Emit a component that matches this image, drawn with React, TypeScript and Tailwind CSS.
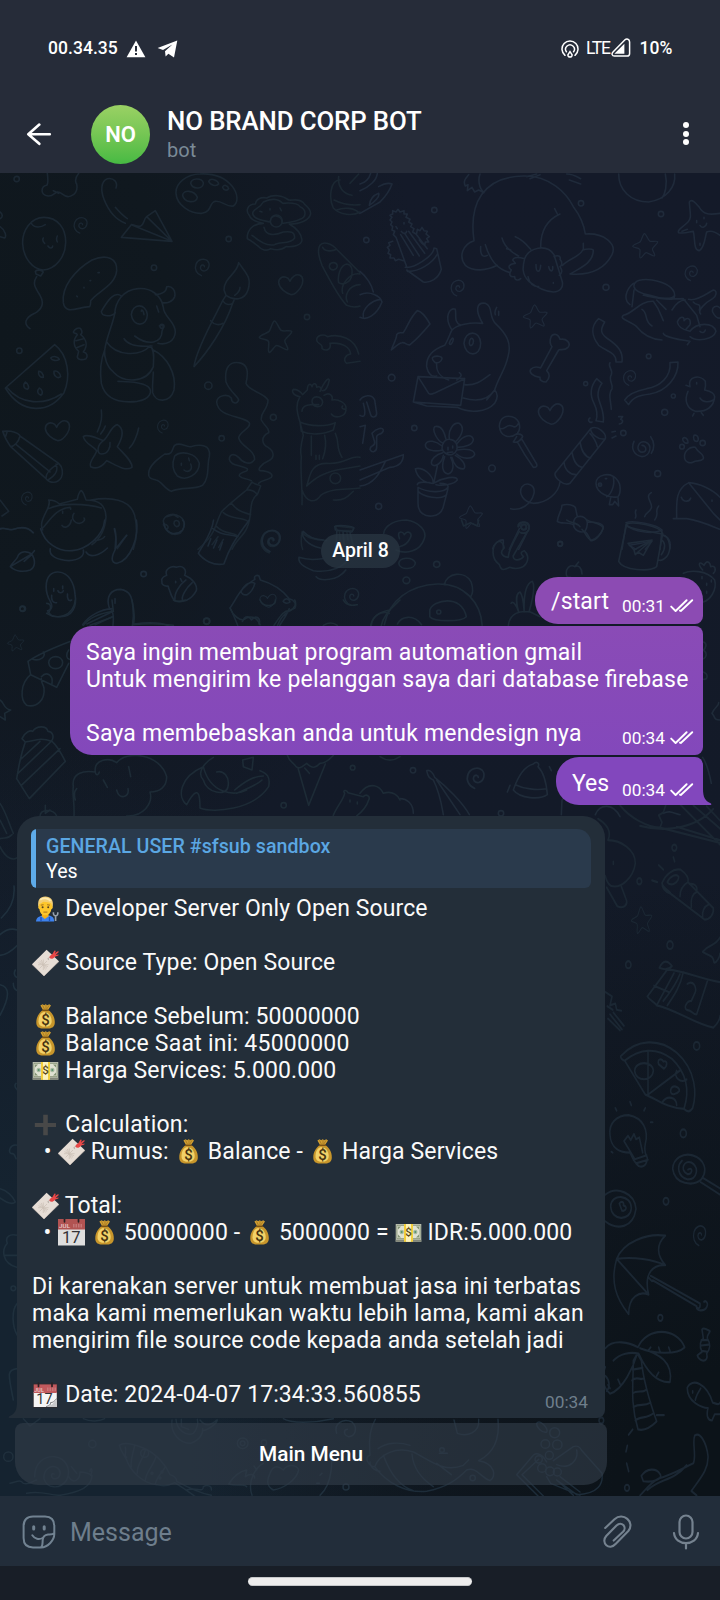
import type { ReactNode } from "react";

const STAR =
  "M-4 -46C2 -48 10 -22 17 -17C24 -12 46 -20 49 -14C51 -8 29 7 28 14C27 22 42 38 36 42C30 44 10 28 3 29C-4 30 -14 52 -20 50C-26 46 -18 22 -22 16C-28 8 -50 10 -50 4C-48 -4 -26 -8 -20 -14C-15 -20 -10 -44 -4 -46Z";
const HEART =
  "M2 30C-14 26 -34 12 -36 -6C-36 -20 -24 -26 -14 -22C-6 -20 -4 -14 -2 -10C2 -22 16 -34 28 -28C40 -22 38 -4 30 8C22 20 12 30 2 30Z";
const SPIRAL =
  "M-2 30C-18 24 -26 8 -20 -8C-14 -24 6 -30 18 -20C28 -10 24 10 10 14C-2 16 -8 6 -4 -2C0 -8 8 -6 8 0";

type Spot = [number, number, number];

function Marks({ d, dots = [], stars = [], hearts = [], spirals = [] }: {
  d: string[];
  dots?: Spot[];
  stars?: Spot[];
  hearts?: Spot[];
  spirals?: Spot[];
}) {
  return (
    <>
      {d.map((p, i) => <path key={"p" + i} d={p} />)}
      {dots.map(([x, y, r], i) => <circle key={"d" + i} cx={x} cy={y} r={r} />)}
      {stars.map(([x, y, s], i) => <path key={"s" + i} d={STAR} transform={`translate(${x} ${y}) scale(${s})`} />)}
      {hearts.map(([x, y, s], i) => <path key={"h" + i} d={HEART} transform={`translate(${x} ${y}) scale(${s})`} />)}
      {spirals.map(([x, y, s], i) => <path key={"w" + i} d={SPIRAL} transform={`translate(${x} ${y}) scale(${s})`} />)}
    </>
  );
}

function Wallpaper() {
  return (
    <svg className="absolute inset-0" width="720" height="1323" viewBox="0 0 720 1323" fill="none" aria-hidden="true">
      <g stroke="#1d2a37" strokeWidth="4.8" strokeLinecap="round" strokeLinejoin="round">
        {/* upper left */}
        <g transform="translate(0 -3) scale(.33333)" stroke="#1b2732">
          <Marks
            d={[
              "M142 10C144 30 146 42 140 46C122 50 120 74 144 78C158 80 164 68 172 66C184 64 188 80 204 80C226 76 234 62 230 42C222 30 228 20 236 10M160 62L176 70",
              "M132 142C92 142 66 182 68 222C70 264 98 298 130 300C166 298 196 262 197 218C198 174 172 142 132 142ZM94 160C104 176 124 172 136 164M130 204C126 210 130 216 134 220M172 198C168 206 170 212 172 216M144 228C150 238 158 234 158 228M106 304C112 298 124 300 130 306L122 318L108 312ZM110 320C96 340 106 354 120 376C136 402 122 420 104 430C74 444 70 462 90 476",
              "M348 54C354 38 342 22 322 26C302 34 302 62 312 88C326 124 350 150 376 160M346 112C358 126 370 138 382 146M364 202L394 164C404 164 412 172 422 168C434 162 430 148 440 140L466 122L516 214ZM394 164L516 214L440 140",
              "M600 12C560 12 526 40 528 70C530 104 570 132 606 130C638 124 626 98 646 94C668 92 680 112 700 108C716 98 714 70 696 48C674 22 640 10 600 12ZM572 40C574 24 604 22 610 38C612 58 578 60 572 40ZM548 76C548 58 584 60 592 82C590 102 552 98 548 76ZM626 34C632 22 654 30 656 42C650 50 630 46 626 34ZM668 52C670 42 684 46 686 56C682 64 670 60 668 52Z",
              "M800 84C782 80 768 88 766 102C742 102 736 124 748 136C752 150 768 156 790 160C760 160 740 180 742 206C756 212 764 222 774 228C788 242 800 244 812 236C832 242 846 240 858 230C882 232 904 226 906 210C904 190 892 176 868 162C900 162 930 150 932 130C930 110 916 108 910 98C896 84 880 92 866 90C848 76 820 72 800 84ZM790 96C812 84 836 86 848 100C870 98 892 98 900 110C920 118 920 142 900 148C880 158 860 158 846 160C848 136 816 128 810 156C790 152 760 148 758 130C758 116 780 116 790 96ZM792 172C798 200 826 196 850 186C872 184 884 184 884 204C870 224 840 214 824 224C796 230 772 208 756 196M810 116V120M840 114L844 122M780 124L786 126",
              "M190 398C184 352 224 300 276 270C324 250 352 268 350 302C346 346 296 362 272 392C272 404 272 408 268 410C232 412 196 436 190 398ZM294 308L298 308M270 332L272 332M252 352L252 354M230 378L232 380",
              "M344 432C346 396 368 360 414 356C452 352 484 376 490 412C490 440 526 454 526 486C524 514 500 526 474 520M344 432C336 470 320 500 314 540C302 570 300 610 304 640C316 690 360 700 412 694C450 688 460 664 444 650C424 636 390 636 354 634M364 378C344 362 324 390 304 424C304 442 336 440 346 428M466 374C486 374 500 364 500 350C516 346 528 362 524 380C518 396 500 400 488 398M394 434C396 400 438 398 442 434C442 472 398 472 394 434ZM424 424C424 416 430 420 432 434M470 408L476 426M478 468C486 464 492 468 490 472L486 484C486 518 446 530 404 498M372 506C386 530 430 530 456 528M320 516C350 560 420 560 450 528C466 540 460 570 460 590C440 640 370 640 340 606C320 590 312 560 314 540M460 540C500 560 530 610 522 660C510 700 466 698 458 668C456 640 460 620 460 606",
              "M716 278C712 312 672 322 672 360L678 376C700 392 734 392 744 360C756 322 738 310 716 278ZM704 376C716 368 720 362 720 352M678 376L668 392C676 404 688 406 698 400L704 386M668 392C650 430 588 536 582 590C620 550 676 470 698 400M632 452C644 466 660 466 668 460",
              "M220 486C224 478 236 470 242 476C248 484 246 490 242 494C262 510 262 530 250 546C262 548 264 560 258 566C246 572 232 568 232 560L236 544C220 530 218 510 232 494C228 488 222 492 220 486ZM228 512L250 506M228 534L252 524",
              "M164 524C206 556 212 622 192 668C148 730 66 736 16 654ZM20 652C64 706 132 706 184 672M152 564C160 556 174 560 178 568C170 574 156 572 152 564ZM116 604C122 602 132 614 130 622C120 624 114 614 116 604ZM162 604C172 600 182 612 182 620C172 628 160 616 162 604ZM76 636C84 640 90 654 82 658C70 656 68 644 76 636ZM118 654C128 658 130 672 122 676C112 672 110 662 118 654Z",
              "M8 784C36 780 58 790 60 798L176 880C188 890 190 910 184 922C172 942 150 940 138 926L32 830C22 816 14 804 8 784ZM60 798C56 816 42 830 32 830M176 880C156 892 136 910 138 926M168 882C178 906 160 920 144 930M46 822L150 906M8 784L22 784L16 802Z",
              "M250 800C260 790 290 804 310 812C326 800 334 766 352 764C372 776 370 800 352 830C370 850 398 874 396 892C376 906 346 884 320 872C306 890 292 900 272 890C264 876 288 856 290 842C276 826 254 820 250 800ZM310 812C290 826 290 850 304 852C324 852 332 832 330 818M304 720C306 740 306 756 292 786M316 768C312 780 306 786 302 792M416 774C412 796 400 824 388 834",
              "M446 910C446 884 480 864 494 852C520 856 516 834 524 826C540 814 556 832 572 830C600 822 634 822 628 860C620 890 630 920 608 946C576 962 548 948 514 964C492 956 486 934 468 930C454 926 444 924 446 910ZM524 858C542 842 588 846 598 880C598 912 560 936 532 918C514 898 518 874 524 858ZM544 880L544 886M566 864L568 872M552 900C564 910 580 900 572 882",
              "M678 636C672 590 692 574 716 578C744 582 746 606 738 640C746 664 790 666 804 690C804 720 780 726 784 750C794 770 810 774 806 788C780 800 786 824 804 832C824 844 824 864 806 872C782 882 772 900 780 902C812 904 820 914 814 922C800 932 784 930 776 940M678 636C690 666 712 676 716 690C710 706 694 698 694 684C682 670 652 676 650 696C654 744 728 736 748 758C754 776 718 784 716 804C724 832 764 838 764 868C750 890 726 876 716 862C700 848 688 854 688 868C692 888 720 884 742 896C746 908 716 904 718 918C728 928 738 924 754 932",
              "M756 936L740 960C728 970 676 1012 664 1026C642 1070 650 1090 594 1138M756 936C764 944 776 944 782 948L772 974C744 990 758 1040 742 1070C734 1096 712 1104 696 1138M740 960C750 958 766 964 772 974M694 1000C710 1020 720 1024 752 1034M670 1028C694 1050 724 1040 744 1054M650 1070C676 1096 700 1084 714 1100M654 1100L636 1124M670 1108L656 1132",
              "M1020 30C990 30 986 86 1000 114C1020 136 1060 138 1080 126M1016 20C1012 50 1030 72 1056 76M1002 90C1030 104 1060 106 1080 104M1010 120C1030 112 1064 112 1078 130M1050 40L1076 12",
              "M960 226C970 212 996 220 1012 240L1080 308M960 226C950 240 958 266 966 286C994 340 1020 386 1040 406C1060 414 1076 410 1080 408M968 232C974 246 998 244 1010 238M988 290C988 274 1010 274 1012 288C1010 302 992 304 988 290ZM1040 282C1020 286 1012 320 1016 338C1026 346 1048 340 1054 322C1060 296 1054 284 1040 282ZM1080 312C1050 306 1020 344 1028 370M1080 344C1046 346 1032 376 1042 396",
              "M950 510C950 496 972 490 982 500C1020 490 1066 506 1076 552M950 510C950 524 970 518 966 536C982 546 994 536 990 520C1030 516 1050 534 1052 552C1036 554 1028 570 1040 580L1080 574",
              "M906 1004C908 960 900 900 904 860C898 840 904 820 910 796L900 756C888 720 888 700 900 680C878 676 874 662 880 658C894 658 904 668 908 674L922 660C922 642 932 638 936 650C940 636 950 640 950 652C964 646 966 660 960 664C970 640 984 620 988 630C984 650 976 662 968 662M900 756C930 770 980 770 1006 758L1000 780C970 794 930 796 904 784ZM906 724C906 704 932 702 956 704M936 694C936 676 964 676 968 696C966 716 938 714 936 694ZM972 676C990 664 1000 680 996 690C1016 686 1040 700 1038 716C1030 720 1022 712 1028 708M1038 720C1036 740 1006 748 994 732M934 798V856M974 796C980 820 974 850 968 866M948 856V868M958 856V868M1006 790C1020 820 1006 830 1026 862M920 948C950 920 970 910 1010 900L1080 888M1080 862C1050 854 1040 884 980 880C930 880 930 920 920 948M906 960C920 1000 946 1000 962 976C994 952 1046 960 1080 954M1000 990C1040 994 1050 970 1060 964",
              "M128 1080C112 1050 158 1010 146 990C164 990 172 996 178 1002L232 988C234 974 240 962 244 962C252 966 254 982 258 990C300 990 316 1006 318 1040C316 1080 300 1106 276 1124M146 1016C180 998 260 1000 304 1014M128 1074C150 1050 170 1014 210 1012M272 990C330 980 390 986 404 1036C414 1080 410 1110 400 1138M188 1024V1030M212 1014V1018M222 1030C212 1044 222 1060 240 1060C252 1058 256 1048 252 1044M214 1050C210 1072 192 1076 186 1066M344 1076C352 1096 344 1120 346 1138M380 1096L352 1136M286 1112C300 1110 310 1106 314 1100",
              "M490 1052C494 1034 520 1026 540 1040C560 1052 552 1080 540 1090C516 1100 492 1084 490 1052ZM500 1040L520 1034L534 1042M526 1052C538 1048 544 1068 530 1070C520 1066 520 1056 526 1052ZM490 1064C500 1060 510 1072 500 1078M514 1092L532 1090",
              "M906 1086C902 1110 904 1128 908 1138M906 1086C920 1106 950 1110 980 1112M1006 1068L1060 1074L1058 1082H1012ZM1018 1082L1020 1110M1030 1082V1110M1040 1082L1044 1110",
              "M0 126C8 132 10 142 0 146M0 170C16 180 20 200 14 204L0 200M0 990L26 1024L6 1038M0 1078C16 1070 24 1082 40 1078C66 1070 84 1072 100 1088",
            ]}
            dots={[[50, 27, 8], [686, 207, 8], [462, 293, 8], [58, 542, 8], [921, 441, 8], [625, 647, 11], [820, 742, 9], [665, 805, 8], [829, 153, 18], [1006, 925, 16], [486, 469, 6]]}
            stars={[[827, 498, 0.98]]}
            hearts={[[872, 344, 1], [172, 782, 1]]}
            spirals={[[241, 164, 0.85], [606, 290, 0.9], [488, 768, 0.7], [80, 984, 0.7], [810, 1112, 1.2]]}
          />
        </g>
        {/* upper right */}
        <g transform="translate(360 -3) scale(.33333)" stroke="#1f2a3a">
          <Marks
            d={[
              "M0 62C30 50 50 30 52 10M0 42C16 38 28 24 32 10M56 50C70 42 86 38 96 42C90 60 80 76 60 96L0 130M28 106C30 86 40 76 56 70C60 80 44 96 28 106Z",
              "M90 150L96 142L90 136L98 132L98 122L108 126L114 118L120 126L132 122L132 132L142 132L138 142L150 148L146 156L156 162L152 170L162 176L158 186L168 192L202 236M90 150L96 156L92 164L98 170L96 180L104 184L100 194L108 202L140 290M98 214L86 218L90 226L82 232L88 240L84 250L92 254L90 264L102 264L106 272L116 268L130 272M170 190L172 178L180 182L186 172L192 182L202 184L198 192L208 200L200 206L206 216L196 216L194 226C188 222 182 216 178 210M136 292C160 296 220 260 222 234L230 236L244 298C236 326 210 340 190 336L140 300M142 304C176 306 218 280 232 252M122 194L160 256M134 190L178 258M146 184L194 250M108 170L112 176M132 158V162M124 184C130 194 140 190 140 184",
              "M342 212C326 100 370 20 490 18C570 16 620 70 640 110C660 136 672 166 676 192M316 48C308 34 318 24 326 14M316 48L324 44L322 62L336 52L344 66L356 60L372 68C356 54 354 28 360 12M500 20L530 12M510 26L540 14M620 12C640 12 650 20 662 26M628 30L662 42M342 212C306 224 296 260 316 286C340 306 380 302 412 286M362 230C360 260 372 262 382 256M376 224C390 270 410 296 450 308M426 204C434 234 460 250 476 258M466 200C490 210 502 226 512 238M542 230C542 180 560 150 600 132M584 116L592 132M676 192C730 188 772 220 756 254C730 304 680 316 630 312C660 294 700 280 700 240C696 236 680 236 668 240C660 260 620 270 608 286M670 220V238M494 266C506 232 560 220 582 254L606 332C612 352 600 366 580 366C550 364 530 352 506 334C484 310 488 290 494 266ZM494 266C480 262 462 258 458 270L466 280C446 282 442 292 454 300C446 312 448 322 464 320C464 332 476 332 482 326M582 260C592 254 604 258 600 268C608 276 606 286 600 290C608 300 606 312 598 316M528 284C528 310 540 310 542 286M566 290C570 308 580 306 578 290M504 320C508 340 520 350 536 350M580 338V340M440 236L452 240",
              "M776 12C776 60 812 96 866 96C920 88 948 50 944 12M916 12C924 44 914 74 906 84",
              "M988 96C994 84 1008 100 1018 112C1030 132 1044 136 1080 130M988 96C990 130 996 144 984 156C970 170 950 180 956 188C976 192 990 184 1000 184C1006 210 1000 240 1018 242C1034 232 1034 206 1040 186C1054 180 1072 190 1080 196M1010 152V158M1032 142V146M1020 166C1026 176 1038 172 1040 160M1020 220V226M966 184L982 178",
              "M822 350C820 330 850 326 876 330C916 336 944 354 944 376C936 390 900 386 870 376C840 370 824 362 822 350ZM822 360L816 410M820 340C796 360 790 390 810 404M944 376L942 386C920 392 880 382 850 376M880 394C840 392 820 430 790 436C776 448 810 452 830 470C850 496 880 508 906 510M880 394C900 420 904 440 910 452M846 418C866 430 850 452 876 468M906 386C930 384 950 388 970 386L1010 436L1020 470M936 420C950 396 964 390 976 390M918 418L890 390M986 388C1010 396 1050 364 1060 360C1074 362 1068 380 1058 386C1040 396 1010 420 1022 432M1000 396C1010 410 1024 396 1018 420M990 484C1010 456 1060 456 1068 484C1060 510 1010 516 990 500M990 484C970 480 954 470 952 456C958 440 974 436 972 452C982 440 994 446 990 464L978 478M1020 484C1026 490 1034 488 1036 480M910 490C910 500 960 510 990 514L982 524M1080 414C1070 404 1054 410 1058 426C1064 438 1072 446 1080 444",
              "M94 540C100 522 110 506 110 494C116 484 122 490 130 488C142 470 152 440 172 422C186 424 202 448 210 462C190 486 170 508 150 524C142 528 136 516 126 518C114 520 104 532 94 540Z",
              "M276 480C250 440 270 410 286 418C290 436 280 456 302 466M276 480C290 464 330 456 368 460C344 420 350 396 376 400C400 410 386 440 406 460C440 492 456 520 444 560C436 600 416 620 404 660M276 480C270 490 264 510 254 526C226 536 198 556 200 590C204 612 216 622 230 618M312 520C314 480 360 478 362 520C362 562 316 562 312 520ZM328 520C328 506 336 500 340 510C342 524 330 534 328 520ZM268 520C272 506 280 500 280 508C278 520 270 528 268 520ZM218 562C228 556 246 558 246 566C244 576 234 580 226 578C220 572 214 568 218 562ZM230 580C228 610 244 622 266 630M298 608C310 616 300 622 290 630M312 644C350 648 370 628 390 614M410 412C404 422 404 428 406 434M416 424V436",
              "M174 620L314 626L302 706L160 696ZM174 620L206 670C214 676 220 670 226 668L314 626M310 684C350 696 384 690 404 660C416 672 410 690 404 700C380 728 326 730 292 712M380 690L404 660M160 696L200 708L290 712",
              "M572 504C576 490 594 488 600 508C620 504 634 520 624 532C612 544 600 536 596 540L560 602C570 612 570 624 558 636C546 636 538 630 540 622C520 620 506 608 512 598C524 586 536 592 542 594L576 530C568 520 570 510 572 504Z",
              "M716 446C690 470 696 500 716 526C740 544 770 548 768 576H786C790 546 776 528 740 504C722 490 720 480 734 456ZM750 578C742 590 760 598 754 614C744 632 760 640 756 656C744 672 752 690 754 718M710 626C690 650 690 676 702 700C712 720 712 740 708 752L730 756C734 720 716 700 714 676C714 660 718 650 726 640ZM930 578L954 576C956 620 920 664 870 672C840 676 820 680 806 704L794 690C806 670 830 662 860 656C900 650 934 620 930 578Z",
              "M990 650C980 620 1020 612 1036 634C1038 648 1036 654 1034 660C1044 662 1062 664 1064 680C1062 710 1040 726 1006 724C980 716 972 690 984 664M990 650L978 646M1020 684C1030 700 1050 696 1060 690M1002 730L998 738M1024 728L1030 736M1010 638V642",
              "M418 768C420 740 440 736 456 740C484 748 482 780 472 790C450 808 420 800 418 768ZM420 776C436 780 440 760 456 768C466 776 474 764 476 758M458 798C470 790 486 790 488 800C484 810 470 820 460 816L470 800M472 816C490 850 504 870 520 892C530 892 532 888 530 882L486 808",
              "M246 836C246 818 256 806 270 808C288 810 294 826 290 840C286 852 272 858 260 852C252 848 248 844 246 836ZM250 820C230 812 216 780 224 770C246 764 254 790 258 808M268 806C264 780 280 756 298 760C314 770 308 796 286 816M292 820C310 796 334 790 340 808C340 824 316 832 292 832M292 840C320 834 344 840 344 854C336 870 304 866 290 852M286 856C304 866 320 884 312 896C292 900 280 880 276 862M272 862C284 884 280 908 264 912C246 908 244 886 254 860M250 856C246 880 226 892 216 884C208 870 230 852 248 848M246 840C226 846 196 842 196 824C202 806 230 814 246 828M264 832V840M278 828V834M262 848L278 846M232 888L222 936M166 896C190 890 220 916 220 940C190 940 170 920 166 896ZM220 940C250 922 290 916 292 930C280 944 250 948 228 944M172 944C172 936 190 936 210 938M240 940C256 940 266 944 264 952C250 972 200 966 174 952V1000C174 1030 196 1040 216 1038C236 1036 246 1026 250 1010L264 956M174 964C190 980 240 992 260 974",
              "M692 776C712 764 740 790 736 806L630 940C610 950 580 920 586 908ZM692 776C692 790 714 812 736 806M660 816C664 840 672 860 692 864M636 846C640 870 648 890 668 892M612 876C614 900 630 914 648 914M690 790C700 800 710 820 712 830M600 936C596 970 560 1000 520 1000C490 996 474 970 486 950C500 934 526 944 522 970C514 1004 480 1024 452 1016",
              "M708 940C708 914 750 902 772 930C784 944 782 972 774 980C750 986 708 970 708 940ZM760 922C766 950 750 976 740 980M752 984L748 1004H758L764 994L776 1008L774 982M720 942V946M736 926H740M690 744C680 750 690 760 696 756M776 740H788L782 748C792 752 788 760 778 762M756 786L766 784M756 804L768 798",
              "M846 826C860 826 864 850 842 846C826 836 836 812 856 816C880 826 870 858 846 860C822 856 812 836 822 814M872 800C884 816 884 836 874 850",
              "M974 866C970 846 988 828 1006 832C1016 850 1034 852 1030 866C1022 876 1010 870 1000 876C988 882 976 876 974 866ZM968 806C976 796 986 812 984 818C976 822 968 816 968 806ZM1002 796C1014 792 1018 808 1012 814C1002 816 998 804 1002 796Z",
              "M950 1046C950 1000 944 960 986 938C1020 940 1060 960 1080 982M986 938L1060 1030L1080 1050M940 1046L980 1046C1020 1052 1060 1070 1080 1078M964 982C972 1000 990 994 992 984M1056 990V994",
              "M606 1006C622 1000 640 1006 646 1012L652 1040C670 1036 680 1046 682 1056C700 1056 726 1058 730 1070C728 1090 706 1110 692 1112C686 1100 684 1090 674 1084C660 1090 642 1080 640 1064C626 1056 600 1062 592 1054C594 1034 606 1020 606 1006ZM652 1040C642 1046 640 1056 642 1064M682 1056C682 1070 680 1078 674 1084",
              "M828 1020C822 1030 832 1036 826 1044M874 968C852 980 880 1000 874 1014C868 1030 856 1026 854 1040M896 1008C882 1026 900 1030 884 1050M798 1058C820 1050 890 1064 906 1080C880 1094 820 1086 798 1064L786 1138M906 1080L900 1138M906 1096C924 1096 934 1116 930 1136M808 1126L876 1114L856 1138M808 1126L828 1138",
              "M476 1070C480 1054 506 1052 508 1070C508 1086 494 1092 484 1088M478 1076L448 1138M502 1086L476 1138M398 1136C402 1120 420 1108 430 1110V1136",
              "M0 690C10 676 36 670 44 690L50 730C50 744 34 744 32 734L20 696M0 736C16 746 18 730 10 700M36 790C50 774 70 770 70 782C66 796 50 790 50 800L50 830C50 846 36 850 30 838C30 824 46 830 44 816ZM0 770L16 766L8 820M0 900L130 854C130 880 110 890 90 892L0 930M76 874C60 910 40 944 0 948",
              "M0 304C20 320 36 346 40 366M0 374C30 360 62 380 66 396C50 436 20 452 0 442M10 440C6 420 30 392 62 388",
            ]}
            dots={[[223, 120, 8], [19, 210, 8], [663, 100, 8], [903, 132, 8], [738, 352, 9], [866, 559, 7], [95, 623, 10], [677, 641, 6], [940, 678, 6], [914, 727, 9], [790, 789, 8], [163, 774, 8], [396, 895, 10], [893, 911, 9], [56, 1009, 9], [600, 1122, 7], [1028, 819, 8], [966, 830, 7], [492, 1072, 8], [720, 944, 5]]}
            stars={[[856, 226, 0.76], [526, 438, 0.72], [333, 1040, 0.7]]}
            hearts={[[572, 732, 1.02]]}
            spirals={[[292, 352, 0.85], [993, 308, 0.8], [808, 622, 0.8]]}
          />
        </g>
        {/* band around the date */}
        <g transform="translate(0 347) scale(.3444 .33333)">
          <Marks
            d={[
              "M118 26C130 70 170 96 210 92C250 88 300 50 304 0M146 86C140 110 170 120 200 122C230 120 246 108 242 90M250 96C262 116 290 106 312 84M396 0C404 50 380 120 340 130C320 128 324 110 334 90C340 70 336 40 332 26M368 46C350 66 340 84 336 84",
              "M30 140C36 126 50 120 54 104C66 90 84 96 92 102L100 92M92 102C106 124 100 144 88 150C70 156 46 156 30 140ZM70 124L92 104",
              "M134 200C134 170 150 154 170 156C200 158 216 190 218 224C224 260 210 290 176 290C150 292 144 284 138 272C150 270 154 260 146 244C138 230 134 216 134 200ZM156 206V214M182 198V206M168 212C172 222 182 218 184 212M150 226C148 240 154 250 164 248M196 222C194 236 200 246 208 240",
              "M318 266C306 230 322 208 350 208C380 212 384 236 386 262C390 290 386 306 384 320M318 266C330 270 330 296 328 316M240 314C256 290 290 268 326 266M252 312L324 276M276 314L326 290M334 236V250M390 312C430 306 470 308 490 318",
              "M576 100C590 72 616 40 620 0M576 100C590 120 620 138 650 132C664 90 680 60 724 0M618 26C650 52 670 40 690 50M612 56L604 78M630 60L620 84M646 66L638 90",
              "M470 184C466 172 480 168 484 166C476 146 500 136 512 142C530 134 544 148 536 166C560 176 574 196 570 212C556 240 530 250 506 242C494 224 492 210 488 198C478 200 468 194 470 184ZM510 184V188M524 176L528 184M540 180C520 196 506 220 508 238M558 188C540 204 526 230 530 240",
              "M668 264C690 230 700 200 740 178C736 168 746 164 752 168L756 180C790 190 820 210 840 236C856 240 862 254 856 264C840 272 820 280 806 316M668 264C676 280 684 300 690 316M700 214C712 190 730 184 740 190C736 206 730 216 718 224C708 226 700 222 700 214ZM822 244C828 232 840 236 842 246C836 252 824 250 822 244ZM704 304C712 284 726 290 730 300C744 282 758 296 752 312M840 266C830 290 816 310 812 316",
              "M476 10C480 40 510 50 530 30C538 16 536 4 530 0",
              "M880 34C874 50 890 74 930 84M880 34C894 50 910 60 940 60M868 112C866 130 880 140 910 152C960 160 1000 140 1016 112M868 112C890 120 910 120 936 116M918 170C930 184 980 184 1004 150M972 20C980 14 1024 18 1028 24L1022 36L974 30ZM978 34L976 84M996 36L1000 80M1016 36L1026 80",
              "M1114 40C1118 14 1150 0 1180 0C1220 6 1240 36 1232 56C1220 94 1180 104 1150 90M1160 56C1150 30 1170 34 1174 44C1184 28 1200 40 1190 56C1184 70 1170 78 1160 80M1158 130C1160 112 1196 108 1206 128C1206 150 1160 152 1158 130Z",
              "M1116 314C1130 240 1190 196 1270 192C1350 190 1396 250 1400 316M1290 194C1296 158 1350 150 1368 186C1376 210 1370 226 1366 232M1078 316C1082 284 1110 272 1130 280M1248 270C1256 240 1340 220 1354 290C1340 306 1260 306 1248 290ZM1154 312C1164 290 1200 280 1224 314",
              "M1504 20C1504 4 1530 0 1536 20C1536 40 1520 42 1512 38M1508 34C1494 60 1476 90 1476 112C1456 110 1450 96 1464 84C1460 62 1444 56 1434 80C1426 110 1440 126 1450 134C1456 154 1464 150 1480 142C1500 150 1520 144 1528 130C1536 116 1532 100 1522 92C1512 96 1510 100 1520 110C1508 124 1490 122 1490 108L1528 40",
              "M1484 250C1490 240 1502 260 1506 276C1496 240 1500 220 1510 216C1520 230 1520 250 1522 276C1520 220 1530 190 1546 184C1556 200 1546 240 1536 276M1476 316C1480 280 1510 270 1540 276L1568 290M1340 0L1346 18L1366 8L1386 18L1390 0M0 26C14 20 26 34 40 28C64 18 84 24 96 38",
            ]}
            dots={[[417, 162, 8], [66, 266, 8], [600, 303, 9], [1268, 133, 9], [1180, 181, 10], [1274, 276, 6], [1520, 20, 8]]}
            hearts={[[778, 242, 0.65]]}
            spirals={[[786, 60, 1.15], [1020, 228, 0.9]]}
          />
        </g>
        {/* right of the outgoing messages */}
        <g transform="translate(400 347) scale(.33333)" stroke="#1f2b39">
          <Marks
            d={[
              "M680 12C700 4 780 16 788 40L770 140C750 156 670 152 656 124ZM684 20C710 30 750 34 786 42M788 44C810 50 816 90 800 110C790 120 780 122 776 120M784 60C796 66 798 86 784 104M684 70L756 60L730 106L714 96L706 104L702 90ZM702 90L756 60L714 96",
              "M850 160C870 150 920 150 944 180C952 210 930 240 910 246M908 150C890 130 900 122 912 136C920 120 930 124 932 140C946 134 950 150 940 160M906 170V176M920 190V196M934 180V186M920 214V220",
              "M500 150C496 170 502 172 512 172M500 150C506 138 516 134 524 140C536 134 546 144 546 162M524 140L536 126",
              "M340 810C350 780 370 740 400 732C410 722 420 730 414 740C434 760 440 800 442 824C420 840 360 836 340 810ZM346 794C370 806 410 812 438 806M330 796L322 816M448 740L454 752",
              "M80 752C90 748 100 760 104 772C140 800 190 850 208 884M80 752C84 770 88 776 100 780C120 820 124 850 130 884M110 780L180 884",
              "M0 836C20 836 40 850 40 880M484 884L486 840C500 826 520 820 530 830M586 884C600 850 640 850 660 890M790 880C810 870 820 880 840 884",
              "M908 712C920 730 930 770 934 790M936 580C944 560 956 560 956 548M936 580C946 590 940 600 960 600M910 366C924 370 916 386 910 390C924 400 918 414 910 416M910 456C926 462 924 480 910 478",
              "M500 0C510 10 530 6 540 20M560 0C576 10 600 6 610 24C604 40 590 60 576 62C560 56 556 36 546 28",
            ]}
            dots={[[481, 71, 7], [39, 751, 8], [303, 880, 8]]}
            spirals={[[226, 772, 1.1]]}
          />
        </g>
        {/* left of and below the outgoing messages */}
        <g transform="translate(0 427) scale(.33333)" stroke="#1d2b36">
          <Marks
            d={[
              "M84 184C120 160 170 140 212 124M84 184L92 224L170 262L206 190M130 156C140 170 120 184 98 178M146 188C148 164 186 164 188 188C186 212 148 212 146 188ZM124 230C140 212 160 226 156 250M92 224C60 250 60 300 80 316C110 324 136 300 132 264C130 254 124 250 124 236M206 150C196 164 200 176 208 178",
              "M0 300C16 310 8 326 32 330L14 340L16 360L0 350",
              "M66 416C74 396 92 390 98 394C110 376 140 376 144 394C158 394 164 412 154 424C120 410 100 424 76 426ZM76 426C60 470 56 500 50 536L88 596L196 484C184 460 170 436 156 424M60 480L120 424M54 520L152 426M64 556L180 446",
              "M222 648C224 600 216 590 220 560C214 520 250 510 286 516C280 480 326 470 350 488C380 450 480 460 500 530C500 560 480 576 450 576C460 610 430 650 380 648M286 516C288 530 296 524 298 516M226 600C220 580 226 570 230 566M310 540L322 562M386 500L392 530M350 570C356 600 390 594 384 566",
              "M610 500C540 530 530 590 560 614C600 540 600 600 600 624C640 640 760 630 806 560C812 530 800 520 780 512M640 472C610 490 590 520 610 540C620 580 680 590 684 560C690 530 670 510 650 516M610 500C630 580 700 590 740 570M728 480L760 472L756 510L730 500ZM704 570C740 540 760 530 790 528M710 580C740 566 770 556 786 540",
              "M862 466C870 490 880 486 888 500C900 510 910 496 920 490C940 510 950 500 960 490C980 490 990 476 1000 466M894 504L926 616L976 492M914 504L928 520",
              "M1000 646C1010 620 1030 600 1034 580C1026 570 1040 568 1044 578L1090 590C1100 580 1112 590 1106 600C1100 620 1080 640 1070 648M1080 580C1110 540 1140 560 1150 580C1180 570 1196 590 1200 600M1140 470C1160 484 1180 484 1200 470M1050 600V606M1072 606V612",
              "M0 610C20 640 30 680 40 700M0 660L20 700M0 716C16 710 20 720 36 704M0 740C20 780 40 780 50 774M120 648C122 626 160 626 170 648M136 616V640M136 640L150 630",
              "M140 10C160 10 150 40 140 40C170 60 220 50 226 0M250 76C270 50 300 40 340 34L336 0M270 76L340 50M396 0C404 40 404 60 400 74C440 70 480 70 520 76M690 24C700 50 720 60 730 60C750 44 770 50 780 74M780 0C790 24 830 20 826 0M822 76C840 50 850 30 870 32C886 24 890 10 884 0M1112 76C1120 40 1150 34 1170 30M1144 76C1150 40 1190 10 1200 0M520 0C540 10 550 0 556 0M1030 0C1040 20 1060 16 1072 14M970 76C990 64 1004 70 1012 76",
            ]}
            dots={[[67, 26, 7], [620, 64, 9], [1058, 503, 7], [851, 616, 8]]}
            stars={[[47, 128, 0.5]]}
          />
        </g>
        {/* strip left of the reply */}
        <g transform="translate(0 707) scale(.33333)" stroke="#1f303d">
          <Marks
            d={[
              "M42 18C46 60 30 90 4 114M0 164C20 146 40 146 52 150M0 226C24 224 40 208 52 196M0 314C30 320 30 350 0 406M46 270C40 280 44 290 50 292M40 310C40 324 46 330 52 332M48 610C42 616 46 624 52 630M52 796C30 790 24 816 32 820C44 820 44 826 48 836",
              "M0 926C20 930 40 950 46 966C36 976 14 964 0 954M52 1066C30 1060 14 1070 22 1090C4 1110 6 1150 50 1162M12 1126H50M52 1270C34 1290 36 1340 52 1366M52 1466C20 1470 24 1480 40 1560",
            ]}
            dots={[[40, 1225, 7]]}
          />
        </g>
        {/* right of the reply */}
        <g transform="translate(580 627) scale(.33333 .4464)" stroke="#1b2733">
          <Marks
            d={[
              "M120 12C150 40 200 60 240 62L246 50L236 34L250 28L258 10M240 62L420 96M290 60L420 90M180 58C240 70 340 70 400 20M300 10L420 100M340 12L420 64M380 14L420 46",
              "M54 42C80 54 96 70 84 90C120 90 166 110 166 142C160 176 120 200 92 192C80 184 78 178 76 170M80 196L112 238C130 244 142 236 140 226L124 194M100 138V144",
              "M246 186C256 168 280 152 302 156C320 166 328 174 324 184L400 242C402 258 388 268 374 268L272 210C256 206 246 200 246 186ZM246 186C250 200 272 204 272 210M324 184C310 190 300 200 300 216M262 184C270 170 290 164 296 172C296 184 274 196 262 184ZM350 206C336 210 332 224 334 240M386 234C372 238 366 250 368 262M328 188C344 186 354 194 350 204M236 146L250 156M216 180L232 184M280 128L284 138",
              "M368 340C390 320 404 330 420 308M368 340C386 350 400 346 402 364C410 366 420 350 420 344",
              "M262 380C300 380 360 400 420 408M262 380L202 440C210 450 220 450 230 460C290 470 340 500 400 510C414 500 420 490 420 484M238 376C250 356 264 360 276 372C264 382 250 380 238 376ZM282 388L230 460M310 386C300 420 280 440 262 460M300 390C284 420 270 430 250 450M222 416L266 430M322 412C340 402 350 420 346 430L334 450C320 450 310 466 320 470C336 470 340 482 350 480L382 406",
              "M76 430L96 440L90 460L106 456L110 470L124 472M82 462L98 470M90 480L126 514M100 476L132 506M84 490L120 516",
              "M122 574C170 534 240 534 290 566C350 606 350 660 338 690C330 700 320 698 312 692C260 690 230 670 196 660L134 584C126 582 122 580 122 574ZM134 584C180 556 230 554 276 580C320 612 330 650 312 692M204 562V660L300 606M164 606C166 584 218 584 220 606C218 632 166 632 164 606ZM236 592C230 580 246 578 250 586C262 582 264 594 252 602ZM272 650C276 636 300 642 298 652C290 660 270 664 272 650ZM248 676C262 660 290 666 290 684M320 626C300 636 280 620 290 606",
              "M90 750C86 724 110 706 146 706C190 712 206 740 196 770C190 790 200 796 202 802C200 818 190 824 176 820C162 812 154 796 150 790C120 790 92 780 90 750ZM132 764L164 804M132 764L144 752L152 762L162 748L168 760L178 756L188 790M160 806L200 796M168 814L204 806M106 690L110 696M150 676L154 684M196 690L192 696M212 722L218 722M94 788L98 790",
              "M278 826C280 802 310 790 338 796C374 804 384 830 364 850C340 866 284 862 278 826ZM324 828C340 820 338 840 322 838C300 830 310 806 334 812C360 824 350 850 324 850C292 844 290 820 306 808M368 846L420 870M362 856L420 884",
              "M76 884C110 864 164 880 168 916C160 960 110 964 76 944M92 910C94 880 154 884 154 914C152 944 94 944 92 910ZM118 904C124 898 134 900 130 908C144 910 138 922 126 920Z",
              "M110 1028C130 990 200 970 256 976C228 996 230 1020 256 1042C220 1040 190 1060 206 1108C180 1100 146 1110 146 1152C108 1116 90 1080 110 1028ZM110 1028C160 1022 220 1030 256 1042M110 1028L206 1108M212 1066L360 1128C362 1142 350 1140 350 1134M218 1076L350 1134C346 1146 374 1146 380 1136C386 1128 378 1120 372 1124M206 1070L216 1078",
              "M366 1186C372 1180 384 1188 390 1190C384 1200 380 1200 382 1206C394 1220 390 1230 380 1240C384 1250 378 1256 370 1256C360 1254 354 1250 352 1244L366 1236C356 1222 362 1210 370 1206ZM364 1210H384M364 1222L386 1220M366 1234L382 1236",
              "M76 1228C100 1206 150 1216 174 1226C200 1180 290 1180 314 1226C290 1244 220 1240 180 1228C240 1240 280 1260 270 1304C230 1306 200 1280 176 1240C150 1236 120 1240 100 1256M76 1270C60 1300 76 1320 90 1330C130 1320 160 1270 172 1240M160 1256C160 1310 150 1350 174 1410C194 1414 214 1404 230 1392C210 1350 190 1300 184 1256L172 1240ZM158 1276L188 1272M156 1300C170 1290 180 1300 190 1296M158 1330C170 1320 190 1330 200 1320M160 1360C180 1350 190 1360 212 1350M166 1390C180 1380 200 1386 220 1374M230 1378H252M206 1232L212 1226M240 1236L236 1226M270 1234L266 1226M230 1290L236 1282M120 1308L114 1298M90 1318L84 1310M146 1422L158 1410M138 1460L142 1446M140 1486L146 1504",
              "M322 1316C336 1294 380 1306 398 1350C404 1350 416 1358 420 1350M322 1316C320 1350 370 1362 384 1362C378 1380 384 1390 396 1390L404 1376L420 1376M338 1324V1328M362 1318C356 1326 348 1334 346 1344",
              "M344 1424C360 1414 380 1440 384 1470C386 1500 360 1520 334 1548L350 1558M344 1424C336 1440 350 1470 340 1486C300 1500 280 1510 236 1520C210 1530 196 1546 180 1558M184 1514C200 1496 230 1496 240 1510C250 1520 220 1530 190 1526ZM202 1546C240 1520 280 1526 320 1490M76 1290C90 1300 90 1316 80 1324",
            ]}
            dots={[[283, 107, 7], [178, 182, 7], [270, 325, 9], [145, 369, 8], [350, 551, 9], [310, 747, 9], [258, 899, 8], [241, 1160, 7], [64, 1390, 7], [141, 1541, 7]]}
            stars={[[185, 268, 0.62]]}
            spirals={[[358, 974, 0.8]]}
          />
        </g>
      </g>
      {/* bottom strip, also seen through the button */}
      <g strokeWidth="4.4" strokeLinecap="round" strokeLinejoin="round">
        <g transform="translate(0 1197) scale(.33333)" stroke="#20303d">
          <Marks
            d={[
              "M70 146L90 168L120 146M250 146C270 156 300 154 314 146",
              "M30 340C50 336 60 326 70 340C90 346 100 330 110 330M80 370C120 360 150 376 180 376C240 366 276 350 276 316M104 320C104 280 130 258 164 260C200 264 214 300 200 330C180 360 140 356 132 326C130 300 150 284 170 292C188 304 180 330 160 326C150 318 156 308 162 312M206 320C220 344 240 330 240 306M240 306C250 306 274 310 276 320M230 310L214 290M270 304C272 290 280 296 272 316",
              "M358 226C370 216 400 222 430 234C470 250 500 290 510 314C530 320 530 330 530 334C560 350 600 370 634 376M358 226C364 250 380 262 384 280C400 310 430 340 470 344C490 350 510 346 524 338C560 360 580 376 600 390M376 232C380 250 370 260 380 262M404 226C400 250 390 270 394 290M436 240C430 270 410 280 412 310M468 260C460 290 440 300 436 330M496 290C486 310 470 320 466 342M560 360C590 350 610 370 610 350C620 344 636 346 634 360",
              "M516 150C510 190 540 220 572 220C600 210 610 190 608 176M528 148C530 180 560 200 580 190C590 180 596 160 592 148M544 148V170L566 178M600 150C620 176 640 160 650 150M608 182C626 180 650 160 652 150",
              "M686 342C700 320 720 304 740 300L736 320C750 310 764 312 764 324M686 342C710 350 730 340 740 350M756 376C740 330 770 290 790 280M960 376C1000 340 1000 260 986 240M810 310C820 280 840 290 850 300C864 280 890 284 896 300C890 330 850 356 820 360C800 350 800 330 810 310ZM850 146C870 160 940 160 1000 146M770 300L762 288M960 316L966 310M950 340H958",
              "M1010 190C1000 160 1030 144 1056 156C1076 176 1064 200 1046 200C1030 196 1030 180 1042 178",
            ]}
            dots={[[25, 260, 14], [277, 222, 11], [728, 220, 16], [728, 220, 7], [792, 218, 8], [1038, 351, 9], [434, 250, 12], [456, 310, 3], [486, 306, 3], [480, 324, 3]]}
          />
        </g>
        <g transform="translate(360 1197) scale(.33333)" stroke="#1d2c39">
          <Marks
            d={[
              "M46 148C20 190 30 240 30 256C10 260 26 290 44 290C80 340 140 370 200 364C260 352 290 330 320 300C350 290 360 320 390 332C410 320 406 280 356 272C400 250 420 210 414 148M44 290C60 250 110 230 160 246C210 270 250 310 310 286L326 270M54 236C80 216 120 216 150 226M70 256C90 310 120 350 160 362M156 252C160 300 190 330 220 350M230 280L274 314M238 250H262M282 150L292 190C320 200 360 190 356 148M30 276C30 294 50 304 60 304",
              "M470 314L520 256C530 244 550 256 560 276M470 314L546 390M486 314L552 380M486 314L536 268M580 272L640 230C650 226 660 230 664 240L726 310C730 340 716 372 650 374L590 330M650 240C656 270 630 300 590 284M590 330L640 376M600 320L660 366M530 160C540 146 566 176 560 186C546 190 528 170 530 160ZM560 320L572 340L660 376",
            ]}
            dots={[[584, 188, 15], [556, 222, 13], [592, 224, 14], [568, 256, 12], [546, 294, 13], [570, 304, 13], [592, 306, 12], [246, 240, 7], [338, 324, 8], [536, 268, 11]]}
          />
        </g>
      </g>
    </svg>
  );
}

const emojiBox = "mx-[0.2px] inline-block h-[27px] w-[27px] align-top";

function MoneyBag() {
  return (
    <svg className={emojiBox} viewBox="0 0 27 27" aria-label="money bag">
      <path d="M8.4 2.4L10.6 1.2L12.2 2.3L13.6 1.3L15.4 2.3L17.2 1.2L19 2.4L16 7H11Z" fill="#d3a032" />
      <path d="M11.3 6.8H15.8C20 9.3 23 14 22.8 19.6C22.7 23.6 20.6 25.2 17.5 25.4H9.6C6.4 25.2 4.3 23.6 4.3 19.6C4.2 14 7.3 9.3 11.3 6.8Z" fill="#c8962b" />
      <path d="M12 9C16.5 9 19.5 13 19.7 17.8C19.8 22 17 23.8 13 23.8C9 23.8 6.4 22 6.5 18C6.7 13 8.5 9.8 12 9Z" fill="#f2d168" />
      <path d="M10.6 7.2H16.4" stroke="#7a5316" strokeWidth="1.4" strokeLinecap="round" />
      <path d="M10.5 2.3L12.4 6M14 2V6M17 2.4L14.8 6" stroke="#8f661c" strokeWidth=".6" />
      <text x="13.6" y="22" textAnchor="middle" fontFamily="Roboto, sans-serif" fontSize="15" fontWeight="500" fill="#46320f">$</text>
    </svg>
  );
}

function Tag() {
  return (
    <svg className={emojiBox} viewBox="0 0 27 27" aria-label="bookmark">
      <path d="M0 15.3L14.6 .8L27 12.3L12 27Z" fill="#e6ddd5" />
      <path d="M0 15.3L12 27L27 12.3" fill="none" stroke="#c9beb5" strokeWidth=".8" />
      <g stroke="#cdc2b7" strokeWidth=".8">
        <path d="M11.3 10.5V21M6 15.7H16.6M7.6 12L15 19.4M15 12L7.6 19.4M9.2 10.9L13.3 20.5M6.4 13.7L16 17.7" />
      </g>
      <path d="M17.2 8.8C17.5 6.2 19.7 5.9 20.8 4.4C21.4 3.4 22 1.4 23 1.4C24.4 1.8 23 3.4 23 4.4C24 3.6 25.6 1.8 26.6 2.4C27.4 3.4 24.5 5 23.8 5.8C24.8 6.2 26.4 4.9 26.7 6C26.4 7 24.2 6.8 22.8 7.9C21.2 9.6 19.5 10.4 17.2 8.8Z" fill="#e74747" />
      <path d="M17.4 8.6C15.8 9 15.6 10.4 16.8 10.8" fill="none" stroke="#a79d96" strokeWidth=".9" />
    </svg>
  );
}

function Banknote() {
  return (
    <svg className={emojiBox} viewBox="0 0 27 27" aria-label="banknote">
      <path d="M.7 5H26.3V22.8H.7Z" fill="#b9bfae" />
      <path d="M.7 20.8H26.3V22.8H.7Z" fill="#82877a" />
      <path d="M2 6.4H25V19.6H2Z" fill="#dfe2d3" stroke="#7c8b6c" strokeWidth=".7" />
      <path d="M3 7.4H6L3 10.4ZM24 7.4H21L24 10.4ZM3 18.6H6L3 15.6ZM24 18.6H21L24 15.6Z" fill="#839374" />
      <circle cx="6.7" cy="13" r="2.2" fill="#a8baa0" /><circle cx="20.3" cy="13" r="2.2" fill="#a8baa0" />
      <circle cx="6.7" cy="13" r="1" fill="#54936e" /><circle cx="20.3" cy="13" r="1" fill="#54936e" />
      <path d="M9 5H18V22.8H9Z" fill="#f3cf3d" />
      <path d="M11 5H16V22.8H11Z" fill="#fbf2bd" />
      <text x="13.5" y="17.2" textAnchor="middle" fontFamily="Roboto, sans-serif" fontSize="11.5" fontWeight="500" fill="#57491a">$</text>
    </svg>
  );
}

function Plus() {
  return (
    <svg className={emojiBox} viewBox="0 0 27 27" aria-label="plus">
      <path d="M11.2 3.8H15.8V12H24V16H15.8V24.2H11.2V16H2.8V12H11.2Z" fill="#484848" />
    </svg>
  );
}

function Mechanic() {
  return (
    <svg className={emojiBox} viewBox="0 0 27 27" aria-label="mechanic">
      <path d="M4 26.6C4.2 22.6 7 21.5 11 20.6H17C20.4 21.5 22 22.6 22.2 26.6Z" fill="#3d82ee" />
      <path d="M9.6 21.2L12.8 24L16.7 21.2L16.3 19H10.4Z" fill="#f2ae18" />
      <path d="M9 26.6V22M17.5 26.6V22" stroke="#1f55b8" strokeWidth="1.3" />
      <path d="M6.2 11C5.6 5 7.8 1.6 13.4 1.6C18.6 1.6 21.5 5 20.8 11L19.4 14H7.4Z" fill="#f4cf75" />
      <path d="M7 9.5C8.8 8.6 9.8 8 11.3 6.8C14.7 7.2 17.2 7.4 19.4 8.4L20.2 11.3C21.2 11.3 21 14 19.5 14C18.6 18.2 16.6 20.3 13.3 20.3C9.8 20.3 8 18.2 7.4 14C6 13.9 5.9 11.4 7 11.2Z" fill="#fdc62c" />
      <path d="M8.2 4.8C11 2.6 16 2.8 18.6 5.8" stroke="#fce9af" strokeWidth="1.8" fill="none" />
      <circle cx="10.6" cy="12.3" r="1" fill="#574020" /><circle cx="16.2" cy="12.3" r="1" fill="#574020" />
      <path d="M9.2 10.1L11.2 9.8M15.5 9.8L17.6 10.1M11.8 17.1H15" stroke="#9a6516" strokeWidth=".9" strokeLinecap="round" />
      <path d="M23.6 26V20.6M21.4 17.3C21.2 19.5 22.1 20.8 23.6 20.8C25.2 20.8 26 19.5 25.8 17.3" stroke="#98a2ad" strokeWidth="1.6" fill="none" />
    </svg>
  );
}

function Calendar({ torn = false }: { torn?: boolean }) {
  return (
    <svg className={emojiBox} viewBox="0 0 27 27" aria-label="calendar">
      {torn ? (
        <>
          <path d="M1 2.5H25.5V26.8H1Z" fill="#2e2b30" />
          <path d="M1.7 11H24.8V26H1.7Z" fill="#f6f5f5" />
          <path d="M1.7 3.4H24.8V12H1.7Z" fill="#c1595d" />
        </>
      ) : (
        <>
          <path d="M0 0H27V26.5H0Z" fill="#dedede" />
          <path d="M0 0H27V10.5H0Z" fill="#b15352" />
        </>
      )}
      <path d={torn ? "M6.5 2V5.5M20 2V5.5" : "M6.5 0V2.8M20.5 0V2.8"} stroke="#2a2023" strokeWidth="1.7" strokeLinecap="round" />
      <text x={torn ? 2.3 : 1} y={torn ? 11 : 9.2} fontFamily="Roboto, sans-serif" fontSize={torn ? 5.3 : 6.2} fontWeight="500" fill="#ebd0d0">JUL</text>
      <path d={torn ? "M15 8.3H24" : "M15 6.7H25"} stroke="#cf8e8e" strokeWidth="3.6" strokeDasharray="1.5 1" opacity=".6" />
      <text x={torn ? 12.5 : 13.3} y={torn ? 23.2 : 24.3} textAnchor="middle" fontFamily="Roboto, sans-serif" fontSize={torn ? 14.5 : 16.5} fill="#333336">17</text>
      {torn && <path d="M15 26C18 25 22.6 22 24.8 18V26Z" fill="#c8c8ca" />}
      {torn && <path d="M14 25.6C17.5 24.6 18.8 23.8 18.6 21.5C20.4 22 23 20 24.8 17.4" stroke="#68686c" strokeWidth=".8" fill="none" />}
    </svg>
  );
}

function Ticks() {
  return (
    <svg width="24" height="14" viewBox="0 0 24 14" fill="none" stroke="#fff" strokeWidth="1.9" strokeLinecap="round" strokeLinejoin="round" aria-label="read">
      <path d="M1.2 7.6L5.6 12L16.6 1.2M10 11.6L10.8 12L22.2 1.2" />
    </svg>
  );
}

function Stamp({ children }: { children: ReactNode }) {
  return (
    <span className="flex items-center gap-[5px] text-[17.3px] leading-[20px] text-white">
      {children}
      <Ticks />
    </span>
  );
}

function Line({ children, className = "" }: { children?: ReactNode; className?: string }) {
  return <p className={"h-[27px] whitespace-pre " + className}>{children}</p>;
}

export default function App() {
  return (
    <div className="flex h-[1600px] w-[720px] flex-col overflow-hidden bg-[#262c39] font-[Roboto,sans-serif] text-white [font-feature-settings:'liga'_1]">
      <div className="flex h-[94px] shrink-0 items-start justify-between pt-[38px] pr-[48px] pl-[48px] text-[17.5px] leading-[21px] font-medium">
        <div className="flex items-center">
          <span className="w-[70px] tracking-[0.05px]">00.34.35</span>
          <svg className="ml-[8px]" width="20" height="18" viewBox="0 0 20 18">
            <path d="M10 .5L19.4 17.2H.6Z" fill="#fff" />
            <path d="M10 6V11.4M10 13V15" stroke="#262c39" strokeWidth="2" />
          </svg>
          <svg className="ml-[11px]" width="21" height="18" viewBox="0 0 21 18">
            <path d="M.6 8L20.3 .5L17 17.5L11.4 13.8L8.6 16.4L8 11.3L15.4 4.6L6 10Z" fill="#fff" />
          </svg>
        </div>
        <div className="flex items-center">
          <svg width="18" height="18" viewBox="0 0 18 18" fill="none" stroke="#fff" strokeWidth="1.5" strokeLinecap="round">
            <path d="M4 15.3A8 8 0 1 1 14 15.3M5.4 11.8A4.4 4.4 0 1 1 12.6 11.8" />
            <path d="M9 11.6L11.1 14.8A2 2 0 0 1 9 17A2 2 0 0 1 6.9 14.8Z" />
          </svg>
          <span className="ml-[7px] w-[24.5px] text-[17.5px] font-normal tracking-[-1.3px]">LTE</span>
          <svg className="-mt-[2px]" width="20" height="19" viewBox="0 0 20 19">
            <path d="M2 14L14 1.8C15.6 .4 18.6 1 18.6 4V15.4C18.6 17 17.6 18 16 18H3.4C1 18 .3 15.7 2 14Z" fill="none" stroke="#fff" strokeWidth="1.5" />
            <path d="M3.4 15.8L13.4 5.7V15.8Z" fill="#fff" />
          </svg>
          <span className="ml-[9px] w-[32.5px] whitespace-nowrap">10%</span>
        </div>
      </div>

      <header className="flex h-[79px] shrink-0 items-start pl-[26px]">
        <svg className="mt-[29px]" width="26" height="24" viewBox="0 0 26 24" fill="none" stroke="#fff" strokeWidth="2.6" strokeLinecap="round" strokeLinejoin="round" aria-label="back">
          <path d="M23.8 11.2H2.6M13.3 1.6L2.3 11.2L13.3 20.8" />
        </svg>
        <div className="mt-[11px] ml-[39px] flex size-[59px] items-center justify-center rounded-full bg-linear-to-b from-[#9ad164] to-[#46ba43] text-[22px] font-semibold">NO</div>
        <div className="ml-[17px] flex-1 whitespace-nowrap">
          <h1 className="mt-[12px] text-[25.8px] leading-[30px] font-medium tracking-[-0.11px]">NO BRAND CORP BOT</h1>
          <p className="mt-[2px] text-[20px] leading-[24px] text-[#7a8a97]">bot</p>
        </div>
        <div className="mt-[28px] mr-[31px] flex flex-col gap-[2.5px]">
          <i className="size-[6px] rounded-full bg-white" />
          <i className="size-[6px] rounded-full bg-white" />
          <i className="size-[6px] rounded-full bg-white" />
        </div>
      </header>

      <main className="relative h-[1323px] shrink-0 overflow-hidden bg-[radial-gradient(ellipse_520px_620px_at_100%_100%,#0c1319_0%,#0c1319_20%,transparent_100%),radial-gradient(ellipse_480px_760px_at_0%_100%,#152330_0%,#152330_40%,transparent_100%),radial-gradient(ellipse_420px_620px_at_0%_12%,#0f171d_0%,#10181f_40%,transparent_100%),linear-gradient(180deg,#141a29_0%,#131a28_50%,#121a24_100%)]">
        <Wallpaper />
        <div className="relative flex flex-col">
          <div className="mt-[361px] ml-[321px] h-[34px] w-[79px] rounded-full bg-[#2a3743]/75 text-center text-[19.5px] leading-[34px] font-medium">April 8</div>

          <div className="mt-[9px] mr-[17px] flex flex-col items-end gap-[2px] text-[23px] leading-[27px]">
            <div className="flex h-[47px] w-[168px] items-start rounded-[23px] rounded-br-[8px] bg-[#8c4bb3] pl-[16px]">
              <span className="mt-[11px] w-[71px] tracking-[0.15px] whitespace-nowrap">/start</span>
              <span className="mt-[19px]"><Stamp>00:31</Stamp></span>
            </div>
            <div className="h-[129px] w-[633px] rounded-l-[22px] rounded-r-[8px] bg-linear-to-b from-[#8a4bb6] to-[#8348bb] pt-[13px] pl-[16px]">
              <Line className="tracking-[0.24px]">Saya ingin membuat program automation gmail</Line>
              <Line className="tracking-[0.225px]">Untuk mengirim ke pelanggan saya dari database firebase</Line>
              <Line />
              <div className="flex justify-between pr-[9px]">
                <Line className="tracking-[0.22px]">Saya membebaskan anda untuk mendesign nya</Line>
                <span className="mt-[8px] flex h-[20px]"><Stamp>00:34</Stamp></span>
              </div>
            </div>
            <div className="relative flex h-[48px] w-[147px] items-start rounded-l-[23px] rounded-tr-[8px] bg-[#8247bd] pl-[16px]">
              <span className="mt-[13px] w-[50px]">Yes</span>
              <span className="mt-[23px]"><Stamp>00:34</Stamp></span>
              <svg className="absolute right-[-9px] bottom-0" width="10" height="16" viewBox="0 0 10 16">
                <path d="M0 0H1C1 8 3 12 8.6 14.2C9.6 14.8 9.6 16 8.6 16H0Z" fill="#8247bd" />
              </svg>
            </div>
          </div>

          <article className="relative mt-[11px] ml-[17px] h-[602px] w-[588px] rounded-t-[22px] rounded-br-[8px] bg-[#232e39] pt-[13px] pl-[15px]">
            <svg className="absolute bottom-0 left-[-9px]" width="10" height="16" viewBox="0 0 10 16">
              <path d="M10 0H9C9 8 7 12 1.4 14.2C.4 14.8 .4 16 1.4 16H10Z" fill="#232e39" />
            </svg>
            <div className="ml-[-1px] h-[59px] w-[560px] overflow-hidden rounded-[6px] rounded-tr-[14px] bg-[#2a3a4c]">
              <div className="h-full border-l-[5px] border-[#5eabe9] pt-[6px] pl-[10px] text-[19.6px]">
                <p className="leading-[24px] font-medium tracking-[0.05px] whitespace-nowrap text-[#5ba7e3]">GENERAL USER #sfsub sandbox</p>
                <p className="leading-[25px]">Yes</p>
              </div>
            </div>
            <div className="mt-[7px] text-[23px] leading-[27px] text-[#fafafa]">
              <Line className="tracking-[0.09px]"><Mechanic /> Developer Server Only Open Source</Line>
              <Line />
              <Line className="tracking-[0.12px]"><Tag /> Source Type: Open Source</Line>
              <Line />
              <Line className="tracking-[0.12px]"><MoneyBag /> Balance Sebelum: 50000000</Line>
              <Line className="tracking-[0.24px]"><MoneyBag /> Balance Saat ini: 45000000</Line>
              <Line className="tracking-[0.12px]"><Banknote /> Harga Services: 5.000.000</Line>
              <Line />
              <Line className="tracking-[0.24px]"><Plus /> Calculation:</Line>
              <Line className="tracking-[0.14px]"><span className="inline-block w-[25.5px]">{"  •"}</span><Tag /> Rumus: <MoneyBag /> Balance - <MoneyBag /> Harga Services</Line>
              <Line />
              <Line className="tracking-[0.1px]"><Tag /> Total:</Line>
              <Line className="tracking-[0.08px]"><span className="inline-block w-[25.5px]">{"  •"}</span><Calendar /> <MoneyBag /> 50000000 - <MoneyBag /> 5000000 = <Banknote /> IDR:5.000.000</Line>
              <Line />
              <Line className="tracking-[0.255px]">Di karenakan server untuk membuat jasa ini terbatas</Line>
              <Line className="tracking-[0.255px]">maka kami memerlukan waktu lebih lama, kami akan</Line>
              <Line className="tracking-[0.165px]">mengirim file source code kepada anda setelah jadi</Line>
              <Line />
              <div className="flex justify-between pr-[17px]">
                <Line className="tracking-[0.09px]"><Calendar torn /> Date: 2024-04-07 17:34:33.560855</Line>
                <span className="mt-[11px] h-[16px] text-[17.3px] leading-[20px] text-[#6f7f8c]">00:34</span>
              </div>
            </div>
          </article>

          <button className="mt-[5px] ml-[15px] h-[62px] w-[592px] rounded-t-[8px] rounded-b-[23px] bg-[#313c48]/65 pt-[2px] text-center text-[20.8px] font-medium">Main Menu</button>
        </div>
      </main>

      <footer className="flex h-[70px] shrink-0 items-center bg-[#222d3a] pt-[2px] pl-[22px]">
        <svg width="34" height="34" viewBox="0 0 34 34" fill="none" stroke="#718291" strokeWidth="2" strokeLinecap="round" strokeLinejoin="round">
          <path d="M19 32.4C26 32.4 32.3 25 32.3 19V11C32.3 5 29 1.5 23 1.5H11C5 1.5 1.6 5 1.6 11V23C1.6 29 5 32.4 11 32.4H19C21 31 20.4 28 20.7 25C21 21.5 22.5 20 26 19.6C29 19.5 31 19.8 32.3 18" />
          <path d="M10.3 20.3C12.7 24 17 25 20.6 23" />
          <path d="M11.7 11.8V14M22.2 11.8V14" strokeWidth="3" />
        </svg>
        <span className="mt-[2px] ml-[14px] flex-1 text-[25px] leading-[30px] text-[#6e7e8c]">Message</span>
        <svg width="30" height="34" viewBox="0 0 30 34" fill="none" stroke="#75828f" strokeWidth="2.1" strokeLinecap="round" strokeLinejoin="round">
          <path d="M2.2 13L11.5 4.2C20 -3.5 32.5 7 25.3 16L12.8 28.8C6 36.5 -2.5 27.5 3.2 21L13.5 10.5C18.5 5.8 24.5 12 20 16.8L10.7 25.6" />
        </svg>
        <svg className="mr-[20px] ml-[39px]" width="28" height="36" viewBox="0 0 28 36" fill="none" stroke="#75828f" strokeWidth="2.2" strokeLinecap="round">
          <rect x="7.5" y="1.5" width="13" height="23" rx="6.5" />
          <path d="M2 19C3.3 32.5 24.7 32.5 26 19M14 29.5V34.5" />
        </svg>
      </footer>
      <div className="flex h-[34px] shrink-0 items-start justify-center bg-[#181e27] pt-[11px]">
        <div className="h-[9px] w-[224px] rounded-full border-y border-[#c5c7c9] bg-[#ededed]" />
      </div>
    </div>
  );
}
